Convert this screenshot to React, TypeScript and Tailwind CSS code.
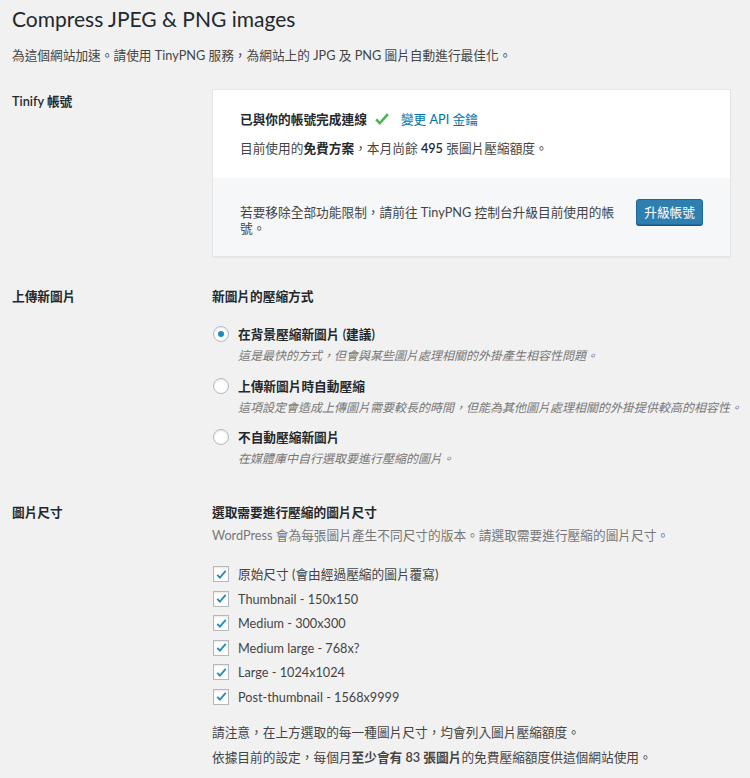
import React, { useState } from 'react';

const sizes = [
  '原始尺寸 (會由經過壓縮的圖片覆寫)',
  'Thumbnail - 150x150',
  'Medium - 300x300',
  'Medium large - 768x?',
  'Large - 1024x1024',
  'Post-thumbnail - 1568x9999',
];

const methods = [
  { label: '在背景壓縮新圖片 (建議)', desc: '這是最快的方式，但會與某些圖片處理相關的外掛產生相容性問題。' },
  { label: '上傳新圖片時自動壓縮', desc: '這項設定會造成上傳圖片需要較長的時間，但能為其他圖片處理相關的外掛提供較高的相容性。' },
  { label: '不自動壓縮新圖片', desc: '在媒體庫中自行選取要進行壓縮的圖片。' },
];

function CheckMark({ className }: { className?: string }) {
  return (
    <svg viewBox="0 0 20 20" className={className}>
      <path d="M3.5 10.5l4 4.2L16.5 4.5" fill="none" stroke="currentColor" strokeWidth="2.8" />
    </svg>
  );
}

export default function App() {
  const [method, setMethod] = useState(0);
  const [checked, setChecked] = useState<boolean[]>(sizes.map(() => true));

  return (
    <div className="min-h-[778px] bg-[#f1f1f1] text-[#444] text-[12.7px] px-3" style={{ fontFamily: 'Lato, "Noto Sans CJK TC", sans-serif' }}>
      <h1 className="text-[21px] leading-[29px] text-[#23282d] pt-[4px]">Compress JPEG &amp; PNG images</h1>
      <p className="mt-[12px] leading-[20px]">為這個網站加速。請使用 TinyPNG 服務，為網站上的 JPG 及 PNG 圖片自動進行最佳化。</p>

      {/* Account */}
      <div className="flex mt-[24px]">
        <div className="w-[200px] shrink-0 pt-[3px] font-semibold text-[#23282d]">Tinify 帳號</div>
        <div className="w-[519px] border border-[#e5e5e5] bg-white shadow-[0_1px_1px_rgba(0,0,0,0.04)]">
          <div className="px-[27px] pt-[19px] pb-[20px]">
            <div className="flex items-center leading-[20px]">
              <span className="font-semibold text-[#23282d]">已與你的帳號完成連線</span>
              <CheckMark className="w-[18px] h-[18px] ml-[6px] text-[#46b450]" />
              <a className="ml-[10px] text-[#0073aa]">變更 API 金鑰</a>
            </div>
            <p className="mt-[9px] leading-[20px]">
              目前使用的<strong className="font-semibold text-[#23282d]">免費方案</strong>，本月尚餘 <strong className="font-semibold text-[#23282d]">495</strong> 張圖片壓縮額度。
            </p>
          </div>
          <div className="bg-[#f5f7f8] flex items-start justify-between px-[27px] pt-[26px] pb-[20px]">
            <p className="w-[380px] leading-[16px]">若要移除全部功能限制，請前往 TinyPNG 控制台升級目前使用的帳號。</p>
            <button className="shrink-0 whitespace-nowrap -mt-[5px] h-[26px] px-[7px] rounded-[3px] bg-[#2e7fb0] border border-[#1f6a98] text-white leading-[24px] shadow-[0_1px_0_#0e5a88]">升級帳號</button>
          </div>
        </div>
      </div>

      {/* New images */}
      <div className="flex mt-[29px]">
        <div className="w-[200px] shrink-0 font-semibold text-[#23282d] leading-[20px]">上傳新圖片</div>
        <div>
          <div className="font-semibold text-[#23282d] leading-[20px]">新圖片的壓縮方式</div>
          <div className="mt-[18px] flex flex-col gap-[10.5px]">
            {methods.map((m, i) => (
              <label key={m.label} className="block cursor-pointer" onClick={() => setMethod(i)}>
                <div className="flex items-center leading-[20px]">
                  <span className="w-[16px] h-[16px] rounded-full border border-[#b4b9be] bg-white shadow-[inset_0_1px_2px_rgba(0,0,0,0.1)] flex items-center justify-center ml-[1px]">
                    {method === i && <span className="w-[6px] h-[6px] rounded-full bg-[#1e8cbe]" />}
                  </span>
                  <span className="ml-[9px] font-semibold text-[#23282d]">{m.label}</span>
                </div>
                <p className="ml-[26px] mt-[3px] italic text-[12px] text-[#777] leading-[18px] whitespace-nowrap">{m.desc}</p>
              </label>
            ))}
          </div>
        </div>
      </div>

      {/* Sizes */}
      <div className="flex mt-[34px]">
        <div className="w-[200px] shrink-0 font-semibold text-[#23282d] leading-[20px]">圖片尺寸</div>
        <div>
          <div className="font-semibold text-[#23282d] leading-[20px]">選取需要進行壓縮的圖片尺寸</div>
          <p className="mt-[3px] text-[#777] leading-[20px]">WordPress 會為每張圖片產生不同尺寸的版本。請選取需要進行壓縮的圖片尺寸。</p>
          <div className="mt-[19px] flex flex-col gap-[4.6px]">
            {sizes.map((s, i) => (
              <label
                key={s}
                className="flex items-center leading-[20px] cursor-pointer"
                onClick={() => setChecked(checked.map((c, j) => (j === i ? !c : c)))}
              >
                <span className="w-[16px] h-[16px] border border-[#b4b9be] bg-white shadow-[inset_0_1px_2px_rgba(0,0,0,0.1)] flex items-center justify-center ml-[1px]">
                  {checked[i] && <CheckMark className="w-[13px] h-[13px] text-[#1e8cbe]" />}
                </span>
                <span className="ml-[9px] text-[#444]">{s}</span>
              </label>
            ))}
          </div>
          <p className="mt-[13px] leading-[25px]">請注意，在上方選取的每一種圖片尺寸，均會列入圖片壓縮額度。</p>
          <p className="leading-[25px]">
            依據目前的設定，每個月<strong className="font-semibold">至少會有 83 張圖片</strong>的免費壓縮額度供這個網站使用。
          </p>
        </div>
      </div>
    </div>
  );
}
